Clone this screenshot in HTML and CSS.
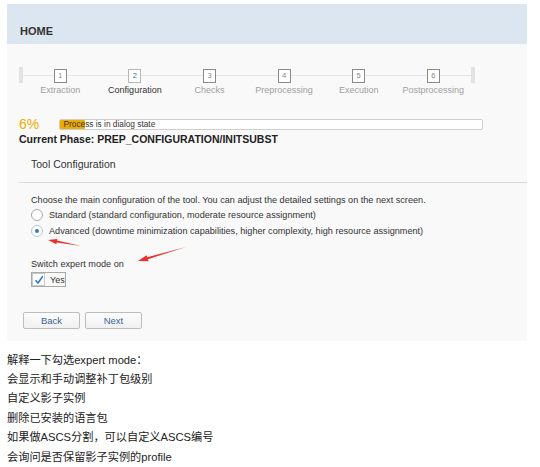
FILE: index.html
```html
<!DOCTYPE html>
<html>
	<head>
		<meta charset="UTF-8">
		<title>HOME</title>
		<link rel="stylesheet" href="styles.css">
	</head>
	<body>
		<div class="panel">
			<div class="head">HOME</div>
			<div class="stepper">
				<div class="bar"></div>
				<div class="step"><span class="num">1</span><span class="label">Extraction</span></div>
				<div class="step on"><span class="num">2</span><span class="label">Configuration</span></div>
				<div class="step"><span class="num">3</span><span class="label">Checks</span></div>
				<div class="step"><span class="num">4</span><span class="label">Preprocessing</span></div>
				<div class="step"><span class="num">5</span><span class="label">Execution</span></div>
				<div class="step"><span class="num">6</span><span class="label">Postprocessing</span></div>
				<div class="bar"></div>
			</div>
			<div class="progress">
				<span class="pct">6%</span>
				<div class="pbar"><div class="fill" style="width: 6%;"></div><span class="ptext">Process is in dialog state</span></div>
			</div>
			<div class="phase">Current Phase: PREP_CONFIGURATION/INITSUBST</div>
			<div class="title">Tool Configuration</div>
			<div class="form">
				<div class="intro">Choose the main configuration of the tool. You can adjust the detailed settings on the next screen.</div>
				<div class="radio"><span class="dot"></span>Standard (standard configuration, moderate resource assignment)</div>
				<div class="radio sel"><span class="dot"></span>Advanced (downtime minimization capabilities, higher complexity, high resource assignment)</div>
				<div class="expert">Switch expert mode on</div>
				<div class="check"><span class="box"><svg width="10" height="10" viewBox="0 0 10 10"><path d="M1.5 5.2 L4 8 L8.8 1.2" fill="none" stroke="#2b7bd0" stroke-width="1.6"/></svg></span>Yes</div>
				<div class="buttons">
					<button class="btn">Back</button>
					<button class="btn">Next</button>
				</div>
			</div>
			<svg class="arrows" width="540" height="340" viewBox="0 0 540 340">
				<polygon points="48,240 57.3,238.9 57.1,240.6 81,246 56.7,242.6 56.4,244.3" fill="#e8322c"/>
				<polygon points="138,261 146.6,255.2 147.3,257.2 186,247 147.9,259.2 148.6,261.3" fill="#e8322c"/>
			</svg>
		</div>
		<div class="notes">
			<p>解释一下勾选expert mode：</p>
			<p>会显示和手动调整补丁包级别</p>
			<p>自定义影子实例</p>
			<p>删除已安装的语言包</p>
			<p>如果做ASCS分割，可以自定义ASCS编号</p>
			<p>会询问是否保留影子实例的profile</p>
		</div>
	</body>
</html>
```

FILE: styles.css
```css
body{margin: 0; background: #fff; font-family: "Liberation Sans", Arial, sans-serif; color: #333;}
.panel{position: relative; width: 520px; margin: 4px 0 0 7px; background: #f9f9f9; padding-bottom: 12px;}
.head{height: 40px; background: #dce6f0; box-sizing: border-box; padding: 20px 0 0 13px; font-size: 11px; font-weight: bold; line-height: 14px;}

.stepper{display: flex; margin: 23px 0 0 12px; height: 27px;
	background: linear-gradient(#e4e4e4, #e4e4e4) no-repeat 0 8px / 456px 1px;}
.stepper .bar{width: 4px; height: 16px; background: #e2e2e2;}
.step{width: 74.6px; display: flex; flex-direction: column; align-items: center;}
.num{width: 11px; height: 12px; margin-top: 2px; border: 1px solid #8a8a8a; background: #fff;
	font-size: 7.5px; line-height: 12px; text-align: center; color: #888;}
.label{margin-top: 1px; font-size: 9px; line-height: 12px; color: #a0a0a0; white-space: nowrap;}
.step.on .num{border-color: #b8b8b8; color: #3e6a99;}
.step.on .label{color: #333;}

.progress{display: flex; align-items: center; height: 14px; margin: 23px 0 0 12px;}
.pct{width: 39.5px; font-size: 14px; line-height: 14px; color: #f0ab00;}
.pbar{position: relative; width: 422px; height: 9px; border: 1px solid #cfcfcf; border-radius: 2px; background: #fff;}
.fill{height: 9px; background: #f0ab00; border-radius: 1px;}
.ptext{position: absolute; left: 4px; top: 0; font-size: 8.3px; line-height: 9px; color: #333;}
.phase{margin: 1px 0 0 12px; font-size: 10.5px; line-height: 14px; font-weight: bold; color: #222;}
.title{margin: 10px 0 0 12px; padding: 0 0 10px 12px; border-bottom: 1px solid #d9d9d9;
	font-size: 10.5px; line-height: 16px;}

.form{padding-left: 24px; font-size: 9.15px; line-height: 14px;}
.intro{margin-top: 10px;}
.radio{display: flex; align-items: center; margin-top: 1px;}
.radio.sel{margin-top: 2px;}
.dot{width: 10px; height: 10px; margin-right: 6px; border: 1px solid #a8a8a8; border-radius: 50%;
	background: #fff; position: relative;}
.radio.sel .dot{border-color: #b7c7d6;}
.radio.sel .dot::after{content: ""; position: absolute; left: 3px; top: 3px; width: 4px; height: 4px;
	border-radius: 50%; background: #3a78b5;}
.expert{margin-top: 19px;}
.check{display: inline-flex; align-items: center; height: 13px; margin-top: 1px;
	border: 1px solid #a9a9a9; font-size: 9px;}
.box{width: 11px; height: 11px; margin-right: 5px; border: 1px solid #c8c8c8; background: #fff;
	display: flex; align-items: center; justify-content: center;}
.buttons{display: flex; gap: 5px; margin: 23px 0 0 -8px;}
.btn{width: 57px; height: 17px; padding: 0; border: 1px solid #bdbdbd; border-radius: 2px;
	background: linear-gradient(#fcfcfc, #f0f0f0); font: 9.5px "Liberation Sans", Arial, sans-serif; color: #3a6591;}

.arrows{position: absolute; left: -7px; top: -4px; pointer-events: none;}

.notes{margin: 10px 0 0 7px; font-family: "Liberation Sans", "Noto Sans CJK SC", sans-serif; font-size: 11.2px; color: #222;}
.notes p{margin: 0; line-height: 19.4px;}
```
